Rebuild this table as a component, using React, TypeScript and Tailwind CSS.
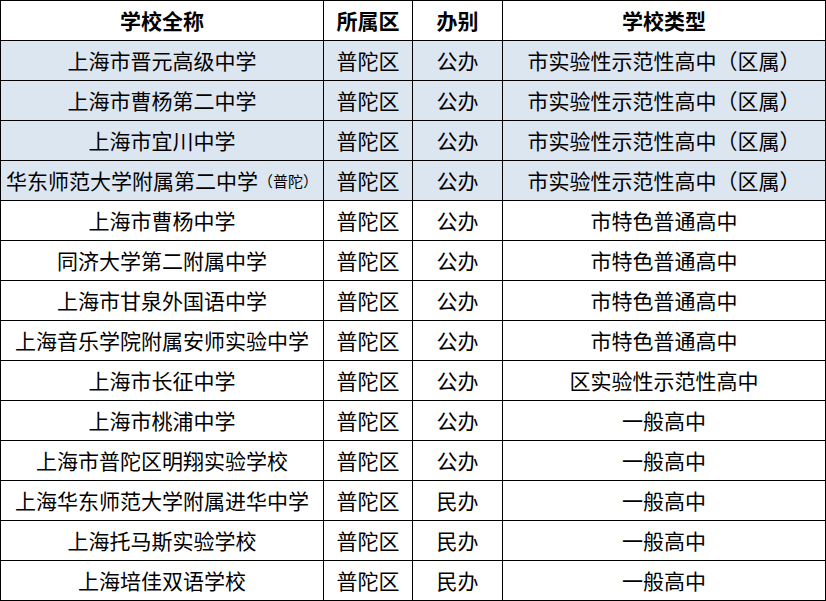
import React from "react";

type Row = { name: React.ReactNode; area: string; kind: string; type: string; hl?: boolean };

const rows: Row[] = [
  { name: "上海市晋元高级中学", area: "普陀区", kind: "公办", type: "市实验性示范性高中（区属）", hl: true },
  { name: "上海市曹杨第二中学", area: "普陀区", kind: "公办", type: "市实验性示范性高中（区属）", hl: true },
  { name: "上海市宜川中学", area: "普陀区", kind: "公办", type: "市实验性示范性高中（区属）", hl: true },
  {
    name: (
      <>
        华东师范大学附属第二中学<span className="text-[15px]">（普陀）</span>
      </>
    ),
    area: "普陀区",
    kind: "公办",
    type: "市实验性示范性高中（区属）",
    hl: true,
  },
  { name: "上海市曹杨中学", area: "普陀区", kind: "公办", type: "市特色普通高中" },
  { name: "同济大学第二附属中学", area: "普陀区", kind: "公办", type: "市特色普通高中" },
  { name: "上海市甘泉外国语中学", area: "普陀区", kind: "公办", type: "市特色普通高中" },
  { name: "上海音乐学院附属安师实验中学", area: "普陀区", kind: "公办", type: "市特色普通高中" },
  { name: "上海市长征中学", area: "普陀区", kind: "公办", type: "区实验性示范性高中" },
  { name: "上海市桃浦中学", area: "普陀区", kind: "公办", type: "一般高中" },
  { name: "上海市普陀区明翔实验学校", area: "普陀区", kind: "公办", type: "一般高中" },
  { name: "上海华东师范大学附属进华中学", area: "普陀区", kind: "民办", type: "一般高中" },
  { name: "上海托马斯实验学校", area: "普陀区", kind: "民办", type: "一般高中" },
  { name: "上海培佳双语学校", area: "普陀区", kind: "民办", type: "一般高中" },
];

function Cell({ children, hl, head }: { children: React.ReactNode; hl?: boolean; head?: boolean }) {
  return (
    <div
      className={
        "flex items-center justify-center whitespace-nowrap text-[21px] leading-none text-black " +
        (hl ? "bg-[#dce6f1] " : "bg-white ") +
        (head ? "font-bold" : "font-normal")
      }
    >
      {children}
    </div>
  );
}

export default function App() {
  return (
    <div
      className="w-[826px] h-[601px] bg-white"
      style={{ fontFamily: '"Noto Sans CJK SC", "Noto Sans", sans-serif' }}
    >
      <div className="grid grid-cols-[322px_88px_89px_322px] auto-rows-[39px] gap-px p-px bg-black w-[826px] h-[601px]">
        <Cell head>学校全称</Cell>
        <Cell head>所属区</Cell>
        <Cell head>办别</Cell>
        <Cell head>学校类型</Cell>
        {rows.map((r, i) => (
          <React.Fragment key={i}>
            <Cell hl={r.hl}>{r.name}</Cell>
            <Cell hl={r.hl}>{r.area}</Cell>
            <Cell hl={r.hl}>{r.kind}</Cell>
            <Cell hl={r.hl}>{r.type}</Cell>
          </React.Fragment>
        ))}
      </div>
    </div>
  );
}
